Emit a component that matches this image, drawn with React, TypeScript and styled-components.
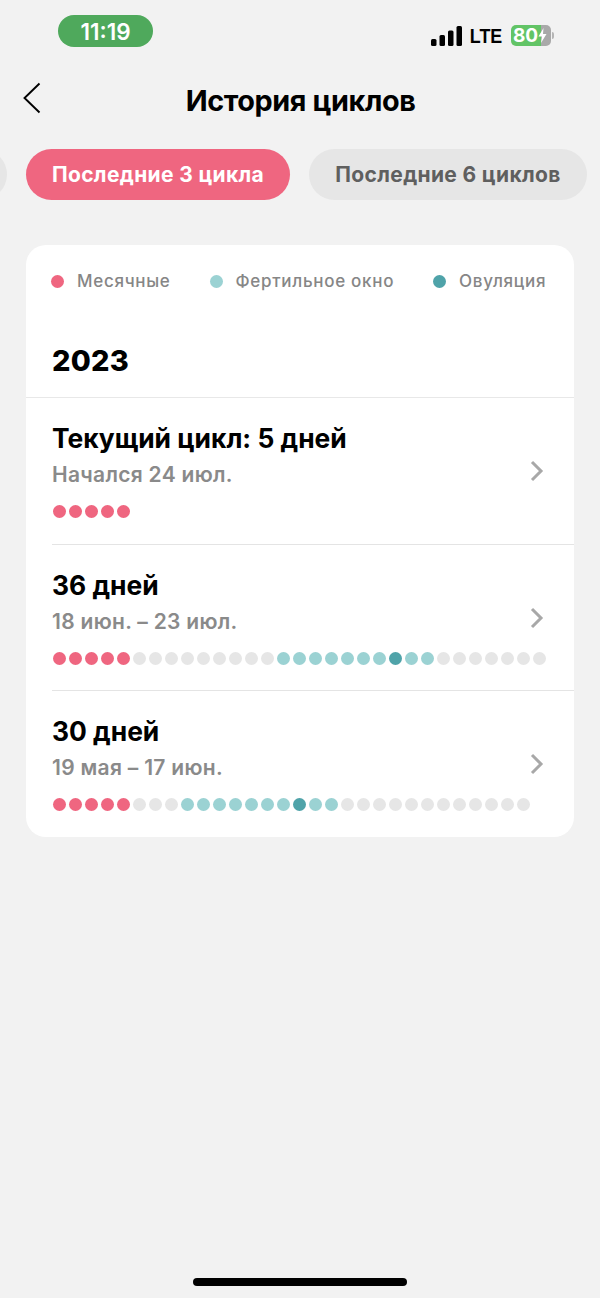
import React from "react"
import styled, { createGlobalStyle } from "styled-components"

const GlobalStyle = createGlobalStyle`
  html, body {
    margin: 0;
    padding: 0;
    background: #f2f2f2;
  }
  * {
    box-sizing: border-box;
  }
`

const Page = styled.div`
  width: 600px;
  height: 1298px;
  display: flex;
  flex-direction: column;
  overflow: hidden;
  background: #f2f2f2;
  font-family: Inter, "Noto Sans", "Liberation Sans", sans-serif;
  color: #000;
`

const StatusBar = styled.div`
  height: 47px;
  padding: 15px 46px 0 58px;
  display: flex;
  justify-content: space-between;
  align-items: flex-start;
`

const TimePill = styled.div`
  width: 95px;
  height: 32px;
  border-radius: 16px;
  background: #4fa95c;
  color: #fff;
  font-size: 22.5px;
  font-weight: 600;
  display: flex;
  align-items: center;
  justify-content: center;
`

const StatusRight = styled.div`
  display: flex;
  align-items: center;
  height: 21px;
  margin-top: 10px;
`

const Lte = styled.span`
  font-family: "Liberation Sans", sans-serif;
  font-size: 21px;
  font-weight: 700;
  line-height: 21px;
  margin: 0 6px 0 5px;
  transform: scaleX(0.85);
`

const Battery = styled.div`
  width: 40px;
  height: 21px;
  border-radius: 5px;
  background: linear-gradient(90deg, #62c466 76%, #a9a9a9 76%);
  color: #fff;
  font-size: 19px;
  font-weight: 700;
  line-height: 21px;
  display: flex;
  align-items: center;
  padding-left: 2px;
`

const BatteryCap = styled.div`
  width: 2px;
  height: 7px;
  margin-left: 1px;
  border-radius: 0 2px 2px 0;
  background: #b5b5b5;
`

const Header = styled.div`
  height: 102px;
  padding: 5px 22px 0;
  display: flex;
  align-items: center;
  position: relative;
  justify-content: center;
`

const BackButton = styled.div`
  position: absolute;
  left: 22px;
  top: 35px;
  width: 20px;
  height: 32px;
`

const Title = styled.h1`
  margin: 0 0 0 1px;
  font-size: 28.8px;
  font-weight: 700;
  letter-spacing: -0.4px;
  line-height: 32px;
`

const TabTrack = styled.div`
  display: flex;
  gap: 19px;
  margin-left: -93px;
`

const Tab = styled.div<{ $active?: boolean; $width: number }>`
  flex: none;
  width: ${(props) => props.$width}px;
  height: 51px;
  border-radius: 26px;
  background: ${(props) => (props.$active ? "#ef6680" : "#e6e6e6")};
  color: ${(props) => (props.$active ? "#fff" : "#5f5f5f")};
  font-size: 21px;
  font-weight: 700;
  letter-spacing: 0.35px;
  display: flex;
  align-items: center;
  justify-content: center;
  white-space: nowrap;
`

const Card = styled.div`
  margin: 45px 26px 0;
  width: 548px;
  height: 592px;
  border-radius: 20px;
  background: #fff;
  overflow: hidden;
`

const Legend = styled.div`
  display: flex;
  gap: 39px;
  padding: 26px 0 0 25px;
  height: 72px;
`

const LegendItem = styled.div`
  display: flex;
  align-items: center;
  gap: 13px;
  height: 20px;
  color: #868686;
  font-size: 17px;
  font-weight: 500;
  letter-spacing: 0.7px;
  white-space: nowrap;
`

const Dot = styled.span<{ $color: string }>`
  flex: none;
  width: 13px;
  height: 13px;
  border-radius: 50%;
  background: ${(props) => props.$color};
`

const Year = styled.div`
  height: 81px;
  padding: 27px 0 0 26px;
  font-size: 29px;
  line-height: 34px;
  font-weight: 800;
  letter-spacing: 0.2px;
  border-bottom: 1px solid #e8e8e8;
`

const RowDivider = styled.div`
  height: 1px;
  margin-left: 26px;
  background: #e4e4e4;
`

const Row = styled.div`
  height: 145.5px;
  padding: 24px 30px 0 26px;
  display: flex;
  flex-direction: column;
`

const RowTop = styled.div`
  display: flex;
  justify-content: space-between;
`

const RowTitle = styled.div`
  font-size: 26.4px;
  line-height: 32px;
  font-weight: 700;
  white-space: nowrap;
`

const RowSub = styled.div`
  margin-top: 8px;
  font-size: 21px;
  line-height: 26px;
  font-weight: 600;
  letter-spacing: 0.3px;
  color: #8a8a8a;
  white-space: nowrap;
`

const DotRow = styled.div`
  margin: 17px 0 0 1px;
  display: flex;
  gap: 3px;
`

const Chevron = styled.div`
  margin-top: 38px;
  width: 14px;
  height: 22px;
`

const HomeBar = styled.div`
  margin: auto auto 12px;
  width: 214px;
  height: 8px;
  border-radius: 4px;
  background: #000;
`

const COLORS = {
  p: "#ef6680",
  g: "#e6e6e6",
  f: "#9bd2d3",
  o: "#4fa3a9",
}

type DotKind = keyof typeof COLORS

// runs of dots as they show on the screen
function dots(runs: [DotKind, number][]) {
  return runs.flatMap(([kind, count]) => Array<DotKind>(count).fill(kind))
}

const ROWS = [
  {
    title: "Текущий цикл: 5 дней",
    sub: "Начался 24 июл.",
    dots: dots([["p", 5]]),
  },
  {
    title: "36 дней",
    sub: "18 июн. – 23 июл.",
    dots: dots([["p", 5], ["g", 9], ["f", 7], ["o", 1], ["f", 2], ["g", 7]]),
  },
  {
    title: "30 дней",
    sub: "19 мая – 17 июн.",
    dots: dots([["p", 5], ["g", 3], ["f", 7], ["o", 1], ["f", 2], ["g", 12]]),
  },
]

function SignalIcon() {
  return (
    <svg width="31" height="20" viewBox="0 0 31 20" fill="#000">
      <rect x="0" y="13" width="5.5" height="7" rx="1.5" />
      <rect x="8.5" y="9" width="5.5" height="11" rx="1.5" />
      <rect x="17" y="4.5" width="5.5" height="15.5" rx="1.5" />
      <rect x="25.5" y="0" width="5.5" height="20" rx="1.5" />
    </svg>
  )
}

function BoltIcon() {
  return (
    <svg width="9" height="15" viewBox="0 0 9 15" fill="#fff">
      <path d="M5.5 0 0.5 8.5H4L3 15 8.5 6H5Z" />
    </svg>
  )
}

function App() {
  return (
    <Page>
      <GlobalStyle />
      <StatusBar>
        <TimePill>11:19</TimePill>
        <StatusRight>
          <SignalIcon />
          <Lte>LTE</Lte>
          <Battery>
            80
            <BoltIcon />
          </Battery>
          <BatteryCap />
        </StatusRight>
      </StatusBar>
      <Header>
        <BackButton>
          <svg width="20" height="32" viewBox="0 0 20 32" fill="none" stroke="#000" strokeWidth="1.9">
            <path d="M17.5 1.5 2.5 16l15 14.5" />
          </svg>
        </BackButton>
        <Title>История циклов</Title>
      </Header>
      <TabTrack>
        <Tab $width={100} />
        <Tab $active $width={264}>Последние 3 цикла</Tab>
        <Tab $width={278}>Последние 6 циклов</Tab>
      </TabTrack>
      <Card>
        <Legend>
          <LegendItem>
            <Dot $color={COLORS.p} />
            Месячные
          </LegendItem>
          <LegendItem>
            <Dot $color={COLORS.f} />
            Фертильное окно
          </LegendItem>
          <LegendItem>
            <Dot $color={COLORS.o} />
            Овуляция
          </LegendItem>
        </Legend>
        <Year>2023</Year>
        {ROWS.map((row, i) => (
          <React.Fragment key={row.title}>
            {i > 0 && <RowDivider />}
            <Row>
              <RowTop>
                <div>
                  <RowTitle>{row.title}</RowTitle>
                  <RowSub>{row.sub}</RowSub>
                </div>
                <Chevron>
                  <svg width="14" height="22" viewBox="0 0 14 22" fill="none" stroke="#a8a8a8" strokeWidth="3">
                    <path d="M2 2l9 9-9 9" />
                  </svg>
                </Chevron>
              </RowTop>
              <DotRow>
                {row.dots.map((kind, j) => (
                  <Dot key={j} $color={COLORS[kind]} />
                ))}
              </DotRow>
            </Row>
          </React.Fragment>
        ))}
      </Card>
      <HomeBar />
    </Page>
  )
}

export default App
